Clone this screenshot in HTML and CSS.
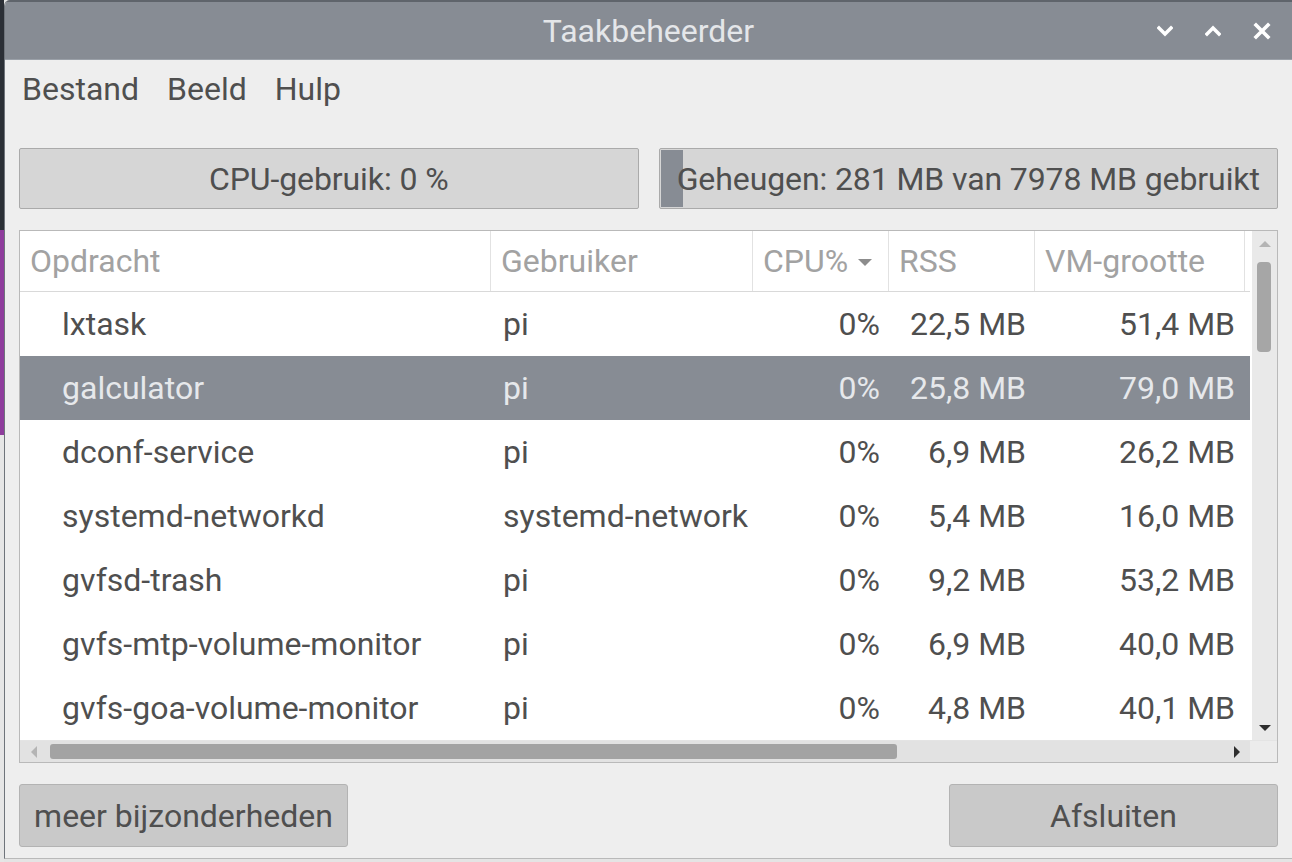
FILE: index.html
```html
<!DOCTYPE html>
<html lang="nl">
<head>
<meta charset="utf-8">
<title>Taakbeheerder</title>
<link rel="stylesheet" href="styles.css">
</head>
<body>
<div class="desktop">
  <div class="d-dark"></div>
  <div class="d-purple"></div>
  <div class="d-light"></div>
</div>
<div class="window">
  <div class="titlebar">
    <div class="title">Taakbeheerder</div>
    <div class="controls">
      <svg class="ctl" width="16" height="12" viewBox="0 0 16 12"><polyline points="2,3 8,9 14,3" fill="none" stroke="#ffffff" stroke-width="3.4" stroke-linecap="square"/></svg>
      <svg class="ctl" width="16" height="12" viewBox="0 0 16 12"><polyline points="2,9 8,3 14,9" fill="none" stroke="#ffffff" stroke-width="3.4" stroke-linecap="square"/></svg>
      <svg class="ctl" width="18" height="18" viewBox="0 0 18 18"><path d="M3 3 L15 15 M15 3 L3 15" fill="none" stroke="#ffffff" stroke-width="3.6" stroke-linecap="square"/></svg>
    </div>
  </div>
  <div class="menubar">
    <span class="menu-item">Bestand</span>
    <span class="menu-item">Beeld</span>
    <span class="menu-item">Hulp</span>
  </div>
  <div class="content">
    <div class="meters">
      <div class="meter"><div class="fill" style="width:0px"></div><span class="meter-text">CPU-gebruik: 0 %</span></div>
      <div class="meter"><div class="fill" style="width:22px"></div><span class="meter-text">Geheugen: 281 MB van 7978 MB gebruikt</span></div>
    </div>
    <div class="tree">
      <div class="tree-main">
        <div class="tree-body">
          <div class="row header">
            <div class="cell hc">Opdracht</div>
            <div class="cell hc">Gebruiker</div>
            <div class="cell hc">CPU%<svg class="sort" width="16" height="8" viewBox="0 0 16 8"><polygon points="1,1 15,1 8,8" fill="#8c8c8c"/></svg></div>
            <div class="cell hc">RSS</div>
            <div class="cell hc">VM-grootte</div>
            <div class="cell hc last"></div>
          </div>
          <div class="row">
            <div class="cell name">lxtask</div><div class="cell user">pi</div><div class="cell num">0%</div><div class="cell num">22,5 MB</div><div class="cell num vm">51,4 MB</div><div class="cell"></div>
          </div>
          <div class="row selected">
            <div class="cell name">galculator</div><div class="cell user">pi</div><div class="cell num">0%</div><div class="cell num">25,8 MB</div><div class="cell num vm">79,0 MB</div><div class="cell"></div>
          </div>
          <div class="row">
            <div class="cell name">dconf-service</div><div class="cell user">pi</div><div class="cell num">0%</div><div class="cell num">6,9 MB</div><div class="cell num vm">26,2 MB</div><div class="cell"></div>
          </div>
          <div class="row">
            <div class="cell name">systemd-networkd</div><div class="cell user">systemd-network</div><div class="cell num">0%</div><div class="cell num">5,4 MB</div><div class="cell num vm">16,0 MB</div><div class="cell"></div>
          </div>
          <div class="row">
            <div class="cell name">gvfsd-trash</div><div class="cell user">pi</div><div class="cell num">0%</div><div class="cell num">9,2 MB</div><div class="cell num vm">53,2 MB</div><div class="cell"></div>
          </div>
          <div class="row">
            <div class="cell name">gvfs-mtp-volume-monitor</div><div class="cell user">pi</div><div class="cell num">0%</div><div class="cell num">6,9 MB</div><div class="cell num vm">40,0 MB</div><div class="cell"></div>
          </div>
          <div class="row">
            <div class="cell name">gvfs-goa-volume-monitor</div><div class="cell user">pi</div><div class="cell num">0%</div><div class="cell num">4,8 MB</div><div class="cell num vm">40,1 MB</div><div class="cell"></div>
          </div>
        </div>
        <div class="vscroll">
          <svg class="arrow" width="14" height="8" viewBox="0 0 14 8"><polygon points="1,7 13,7 7,1" fill="#b4b4b4"/></svg>
          <div class="vthumb-track"><div class="vthumb"></div></div>
          <svg class="arrow" width="14" height="8" viewBox="0 0 14 8"><polygon points="1,1 13,1 7,7" fill="#2e2e2e"/></svg>
        </div>
      </div>
      <div class="hscroll-row">
        <div class="hscroll">
          <svg class="arrow" width="8" height="14" viewBox="0 0 8 14"><polygon points="7,1 7,13 1,7" fill="#b4b4b4"/></svg>
          <div class="hthumb-track"><div class="hthumb"></div></div>
          <svg class="arrow" width="8" height="14" viewBox="0 0 8 14"><polygon points="1,1 1,13 7,7" fill="#2e2e2e"/></svg>
        </div>
        <div class="corner"></div>
      </div>
    </div>
    <div class="buttons">
      <button class="btn">meer bijzonderheden</button>
      <button class="btn">Afsluiten</button>
    </div>
  </div>
</div>
</body>
</html>
```

FILE: styles.css
```css
* { box-sizing: border-box; }

html, body {
  margin: 0;
  padding: 0;
}

body {
  width: 1292px;
  height: 862px;
  overflow: hidden;
  display: flex;
  background: #e4e4e4;
  font-family: Roboto, "Liberation Sans", sans-serif;
  font-size: 32px;
  color: #4f4f4f;
}

.desktop {
  width: 4px;
  display: flex;
  flex-direction: column;
  flex-shrink: 0;
}
.d-dark { height: 230px; background: #2b2f36; }
.d-purple { height: 205px; background: #8e3c9c; }
.d-light { flex: 1; background: #e6e6e6; }

.window {
  flex: 1;
  height: 859px;
  display: flex;
  flex-direction: column;
  background: #eeeeee;
  border-left: 1px solid #6f747b;
  border-bottom: 1px solid #b9b9b9;
  border-top-left-radius: 6px;
  overflow: hidden;
}

.titlebar {
  height: 60px;
  flex-shrink: 0;
  display: grid;
  grid-template-columns: 1fr auto 1fr;
  align-items: center;
  background: #878c94;
  border-top: 2px solid #5f646b;
  border-bottom: 1px solid #9aa0a8;
}
.title {
  grid-column: 2;
  color: #e4e6e9;
  line-height: 38px;
  padding-top: 1px;
}
.controls {
  grid-column: 3;
  justify-self: end;
  display: flex;
  align-items: center;
  gap: 32px;
  padding-right: 21px;
}
.ctl { display: block; }

.menubar {
  height: 60px;
  flex-shrink: 0;
  display: flex;
  align-items: center;
  padding-left: 3px;
  padding-bottom: 2px;
}
.menu-item {
  padding: 0 14px;
  line-height: 40px;
}

.content {
  flex: 1;
  display: flex;
  flex-direction: column;
  padding: 28px 14px 11px 14px;
}

.meters {
  display: flex;
  gap: 20px;
  height: 61px;
}
.meter {
  flex: 1;
  position: relative;
  display: flex;
  align-items: center;
  justify-content: center;
  background: #d6d6d6;
  border: 1px solid #aaaaaa;
  border-radius: 2px;
}
.fill {
  position: absolute;
  left: 1px;
  top: 1px;
  bottom: 1px;
  background: #878c94;
}
.meter-text {
  position: relative;
  line-height: 40px;
  white-space: nowrap;
  letter-spacing: -0.1px;
}

.tree {
  margin-top: 21px;
  height: 533px;
  display: flex;
  flex-direction: column;
  border: 1px solid #b9b9b9;
  background: #ffffff;
}
.tree-main {
  height: 509px;
  display: flex;
}
.tree-body {
  width: 1230px;
  display: flex;
  flex-direction: column;
}
.row {
  display: grid;
  grid-template-columns: 471px 262px 136px 146px 210px 1fr;
  height: 64px;
  align-items: center;
  white-space: nowrap;
}
.row.header {
  height: 61px;
  border-bottom: 1px solid #d9d9d9;
  align-items: stretch;
}
.cell {
  line-height: 40px;
}
.hc {
  display: flex;
  align-items: center;
  padding-left: 10px;
  color: #a2a2a2;
  border-right: 1px solid #e2e2e2;
}
.hc.last { border-right: none; }
.sort { margin-left: 9px; margin-top: 2px; }

.name { padding-left: 42px; }
.user { padding-left: 12px; }
.num { text-align: right; padding-right: 9px; }
.vm { padding-right: 10px; }

.row.selected {
  background: #878c94;
  color: #e6e8eb;
}

.vscroll {
  flex: 1;
  display: flex;
  flex-direction: column;
  align-items: center;
  background: #e9e9e9;
  padding: 9px 0 8px;
  margin-left: 2px;
}
.vthumb-track {
  flex: 1;
  width: 100%;
  padding: 14px 6px 0 5px;
}
.vthumb {
  height: 90px;
  background: #a6a6a6;
  border-radius: 4px;
}
.arrow { display: block; flex-shrink: 0; }

.hscroll-row {
  height: 22px;
  display: flex;
  border-top: 1px solid #e4e4e4;
}
.hscroll {
  width: 1230px;
  display: flex;
  align-items: center;
  background: #e2e2e2;
  padding: 0 9px 0 10px;
}
.hthumb-track {
  flex: 1;
  height: 100%;
  padding: 3px 0 3px 12px;
}
.hthumb {
  width: 847px;
  height: 100%;
  background: #a3a3a3;
  border-radius: 3px;
}
.corner {
  flex: 1;
  background: #ececec;
}

.buttons {
  margin-top: 21px;
  height: 63px;
  display: flex;
  justify-content: space-between;
}
.btn {
  width: 329px;
  height: 63px;
  font-family: Roboto, "Liberation Sans", sans-serif;
  font-size: 32px;
  color: #4f4f4f;
  background: #c9c9c9;
  border: 1px solid #b3b3b3;
  border-radius: 3px;
  padding: 0;
  line-height: 40px;
}
```
